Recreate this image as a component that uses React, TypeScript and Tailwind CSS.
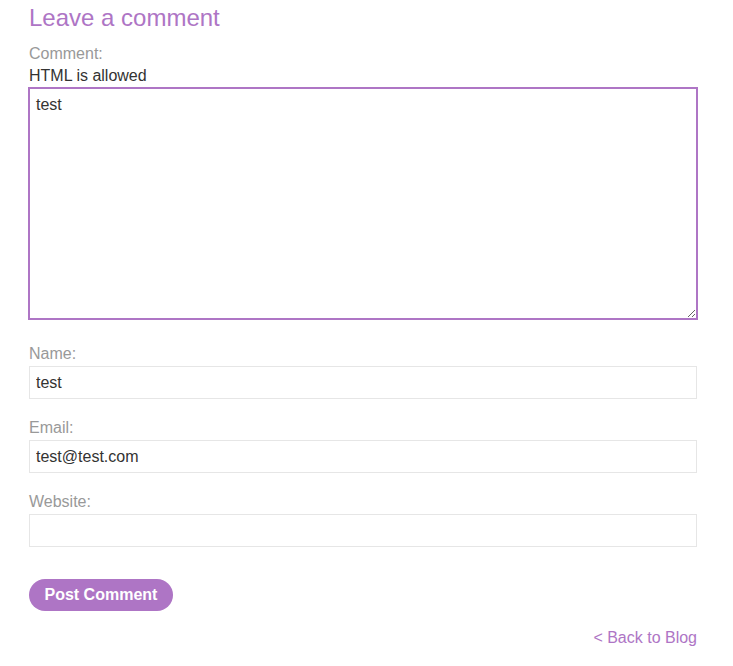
import React from "react";

export default function App() {
  return (
    <div className="min-h-[666px] w-[733px] bg-white" style={{ fontFamily: '"Liberation Sans", Arial, sans-serif' }}>
      <div className="ml-[29px] w-[668px] pt-[3px]">
        <h1 className="m-0 text-[24px] leading-[30px] font-normal text-[#ae75c5]">Leave a comment</h1>
        <form className="mt-[9px] flex flex-col" onSubmit={(e) => e.preventDefault()}>
          <label className="text-[16px] leading-[23px] text-[#999999]">Comment:</label>
          <div className="text-[16px] leading-[22px] text-[#333332]">HTML is allowed</div>
          <textarea
            defaultValue="test"
            className="-mx-px block h-[233px] w-[670px] border-2 border-[#ae75c5] px-[6px] py-[4px] text-[16px] leading-[23px] text-[#333332] outline-none"
            style={{ fontFamily: '"Liberation Sans", Arial, sans-serif' }}
          />
          <label className="mt-[21.5px] text-[16px] leading-[23px] text-[#999999]">Name:</label>
          <input
            defaultValue="test"
            className="mt-[1.5px] block h-[33px] w-full border border-[#e6e6e6] px-[6px] text-[16px] text-[#333332] outline-none"
          />
          <label className="mt-[16.5px] text-[16px] leading-[23px] text-[#999999]">Email:</label>
          <input
            defaultValue="test@test.com"
            className="mt-[1.5px] block h-[33px] w-full border border-[#e6e6e6] px-[6px] text-[16px] text-[#333332] outline-none"
          />
          <label className="mt-[16.5px] text-[16px] leading-[23px] text-[#999999]">Website:</label>
          <input
            defaultValue=""
            className="mt-[1.5px] block h-[33px] w-full border border-[#e6e6e6] px-[6px] text-[16px] text-[#333332] outline-none"
          />
          <div className="mt-[32px]">
            <button
              type="submit"
              className="h-[32px] rounded-full bg-[#ae75c5] px-[15.5px] text-[16px] font-bold text-white"
            >
              Post Comment
            </button>
          </div>
        </form>
        <div className="mt-[14.5px] text-right text-[16px] leading-[23px]">
          <a href="#" className="text-[#ae75c5] no-underline">&lt; Back to Blog</a>
        </div>
      </div>
    </div>
  );
}
